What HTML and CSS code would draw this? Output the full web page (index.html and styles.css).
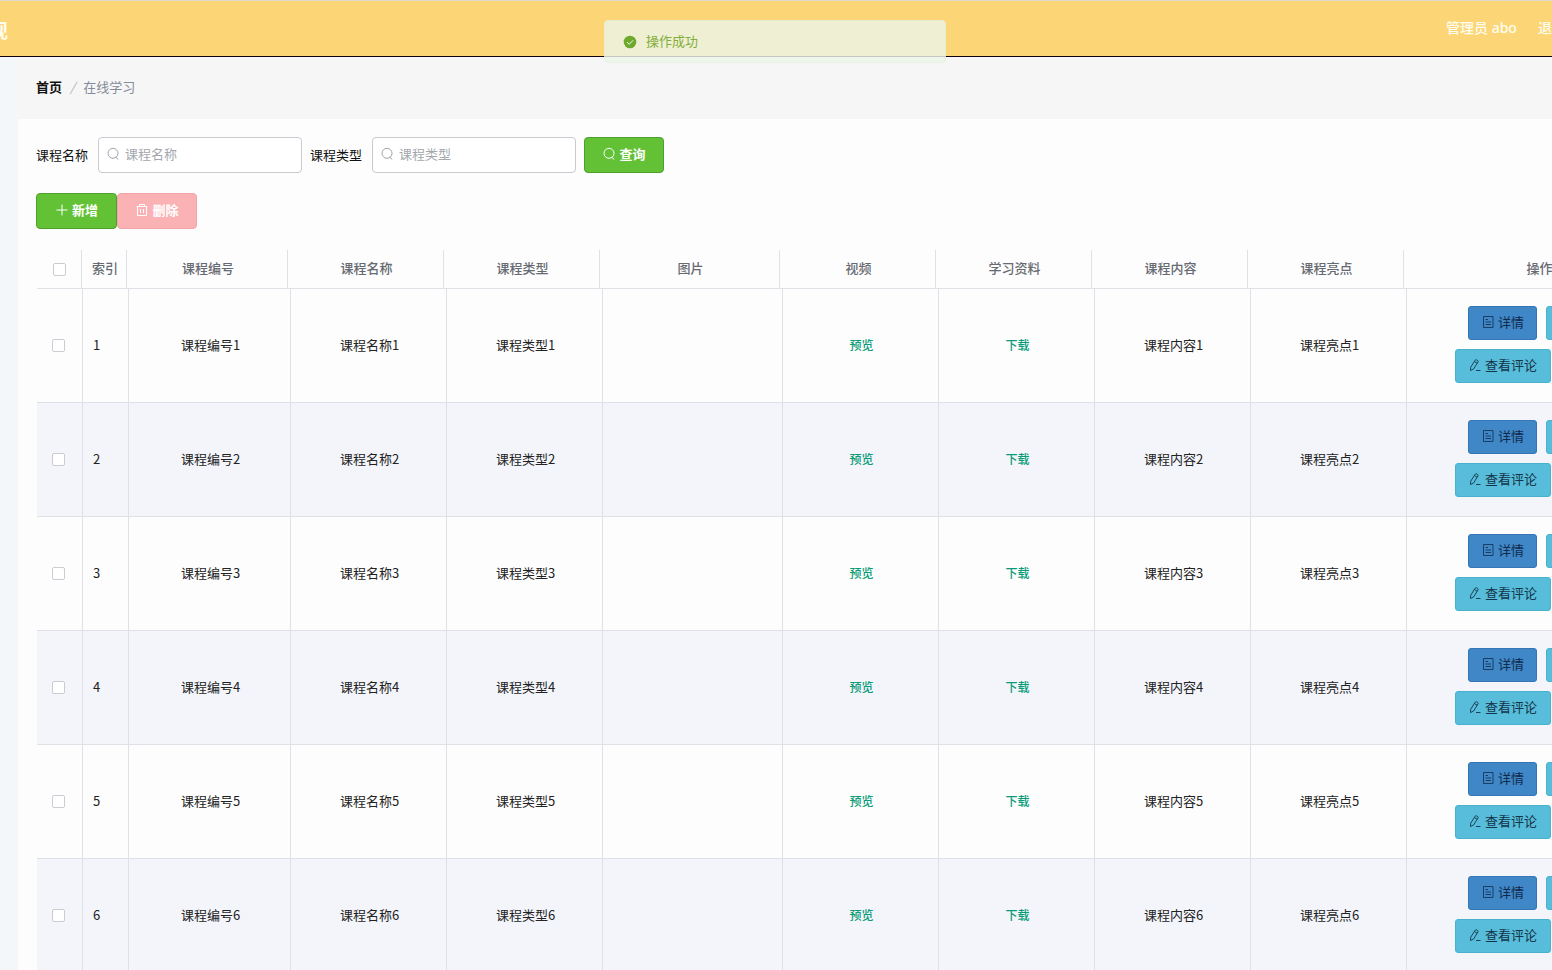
FILE: index.html
```html
<!DOCTYPE html>
<html lang="zh-CN">
<head>
<meta charset="utf-8">
<title>在线学习</title>
<link rel="stylesheet" href="styles.css">
</head>
<body>
<svg class="sprite" aria-hidden="true">
  <symbol id="search" viewBox="0 0 14 14"><circle cx="7" cy="6.3" r="5"/><path d="M9.5 10l2.8 2.6"/></symbol>
  <symbol id="plus" viewBox="0 0 14 14"><path d="M7 1.5v11M1.5 7h11"/></symbol>
  <symbol id="trash" viewBox="0 0 14 14"><path d="M1.5 3.5h11M4.5 3.5v-2h5v2M2.5 3.5v9h9v-9M5.5 6v4M8.5 6v4"/></symbol>
  <symbol id="doc" viewBox="0 0 14 14"><path stroke-width=".8" d="M2.5 1.5h9.5v11h-9.5zM4.5 4.5h2.5M4.5 7h5.5M4.5 9.5h5.5"/></symbol>
  <symbol id="edit" viewBox="0 0 14 14"><path stroke-width=".9" d="M7.2 2.2q.6-.8 1.5-.3l1 .6q.8.6.3 1.4l-4.5 7.2-3 1.4.2-3.3zM6.4 3.5l2.8 1.7M8 12.5h4.5"/></symbol>
</svg>
<header class="topbar">
  <h1 class="brand">现</h1>
  <nav class="account"><span>管理员 abo</span><a href="#">退</a></nav>
</header>
<div class="toast" role="status">
  <svg class="toast-icon" viewBox="0 0 14 14"><circle cx="7" cy="7" r="6.3"/><path d="M4 7.2l2.2 2.1 3.9-4"/></svg>
  <span>操作成功</span>
</div>
<div class="layout">
  <aside class="side"></aside>
  <main class="main">
    <nav class="crumbs"><a href="#">首页</a><i>/</i><span>在线学习</span></nav>
    <section class="card">
      <form class="filters">
        <label for="name">课程名称</label>
        <div class="field"><svg class="icon"><use href="#search"/></svg><input id="name" type="text" placeholder="课程名称"></div>
        <label for="type">课程类型</label>
        <div class="field"><svg class="icon"><use href="#search"/></svg><input id="type" type="text" placeholder="课程类型"></div>
        <button class="btn green" type="button"><svg class="icon"><use href="#search"/></svg>查询</button>
      </form>
      <div class="tools">
        <button class="btn green add" type="button"><svg class="icon"><use href="#plus"/></svg>新增</button>
        <button class="btn pink" type="button" disabled><svg class="icon"><use href="#trash"/></svg>删除</button>
      </div>
      <div class="grid">
        <table class="head">
          <colgroup><col class="h-check"><col class="h-index"><col class="h-code"><col class="c-std"><col class="c-std"><col class="c-pic"><col class="c-std"><col class="c-std"><col class="c-std"><col class="c-std"><col class="c-act"></colgroup>
          <thead><tr><th class="all"><input type="checkbox" aria-label="全选"></th><th>索引</th><th>课程编号</th><th>课程名称</th><th>课程类型</th><th>图片</th><th>视频</th><th>学习资料</th><th>课程内容</th><th>课程亮点</th><th>操作</th></tr></thead>
        </table>
        <table class="body">
          <colgroup><col class="b-check"><col class="b-index"><col class="b-code"><col class="c-std"><col class="c-std"><col class="c-pic"><col class="c-std"><col class="c-std"><col class="c-std"><col class="c-std"><col class="c-act"></colgroup>
          <tbody id="rows"></tbody>
        </table>
      </div>
    </section>
  </main>
</div>
<script src="rows.js"></script>
</body>
</html>
```
FILE: rows.js
```js
const rows = document.getElementById("rows");
for (let n = 1; n <= 6; n++) {
  rows.insertAdjacentHTML("beforeend", `<tr>
    <td class="pick"><input type="checkbox" aria-label="${n}"></td>
    <td class="num">${n}</td>
    <td>课程编号${n}</td><td>课程名称${n}</td><td>课程类型${n}</td><td></td>
    <td><a href="#">预览</a></td><td><a href="#">下载</a></td>
    <td>课程内容${n}</td><td>课程亮点${n}</td>
    <td class="ops"><div class="acts">
      <div class="line"><button class="act blue" type="button"><svg class="icon"><use href="#doc"/></svg>详情</button><button class="act cyan" type="button"></button></div>
      <div class="line"><button class="act cyan wide" type="button"><svg class="icon"><use href="#edit"/></svg>查看评论</button><button class="act cyan" type="button"></button></div>
    </div></td></tr>`);
}
```
FILE: styles.css
```css
* { box-sizing: border-box; }
body {
  margin: 0;
  height: 100vh;
  overflow: hidden;
  background: #f6f6f6;
  color: #222;
  font: 13px/20px "Noto Sans CJK SC", sans-serif;
  display: flex;
  flex-direction: column;
}
a { color: inherit; text-decoration: none; }
button, input { font: inherit; }
.sprite { position: absolute; width: 0; height: 0; }
.icon { width: 14px; height: 14px; flex: none; fill: none; stroke: currentColor; }

.topbar {
  flex: none;
  height: 57px;
  padding-bottom: 2px;
  display: flex;
  align-items: center;
  justify-content: space-between;
  background: #fcd676;
  border-top: 1px solid #dcdcc8;
  border-bottom: 1px solid #100010;
  color: #fffdf0;
  white-space: nowrap;
}
.brand { margin: 0 0 0 -11px; font-size: 19px; line-height: 28px; padding-top: 4px; }
.account { display: flex; gap: 21px; width: 106px; font-family: "Noto Sans", "Noto Sans CJK SC", sans-serif; font-size: 14px; font-weight: 500; }

.toast {
  position: absolute;
  top: 20px;
  left: calc(50% - 172px);
  width: 342px;
  height: 43px;
  padding: 0 18px;
  display: flex;
  align-items: center;
  gap: 9px;
  border: 1px solid #e5f3df;
  border-radius: 4px;
  background: #edf5e8;
  color: #67a52f;
  opacity: .82;
}
.toast span { padding-bottom: 2px; }
.toast-icon { width: 14px; height: 14px; fill: #4ea01c; }
.toast-icon path { fill: none; stroke: #fff; }

.layout { flex: 1; display: flex; min-height: 0; }
.side { flex: none; width: 18px; background: #f3f7fa; }
.main { flex: 1; min-width: 0; overflow: hidden; }
.crumbs { height: 62px; padding: 0 18px 2px; display: flex; align-items: center; gap: 8px; color: #858b99; }
.crumbs a { color: #111; font-weight: 700; }
.crumbs i { color: #aab0bb; }

.card { background: #fdfdfd; padding: 18px 0 0 18px; min-height: 100%; }
.filters { display: flex; align-items: center; }
.filters label { width: 62px; color: #111; }
.field {
  width: 204px;
  height: 36px;
  margin-right: 8px;
  padding: 0 7px 2px;
  display: flex;
  align-items: center;
  gap: 5px;
  background: #fff;
  border: 1px solid #c8cad0;
  border-radius: 4px;
  color: #a0a3aa;
}
.field input { flex: 1; min-width: 0; padding: 0; border: 0; outline: 0; background: none; color: #222; }
.field input::placeholder { color: #a5a7ad; }
.btn {
  width: 80px;
  height: 36px;
  padding: 0 0 3px;
  display: flex;
  align-items: center;
  justify-content: center;
  gap: 3px;
  border: 1px solid #4f9f2c;
  border-radius: 4px;
  background: #62c134;
  color: #fff;
  font-weight: 700;
}
.add { width: 81px; }
.pink { border-color: #f3a5a8; background: #fab2b5; }
.tools { display: flex; padding: 20px 0; }

.grid { overflow: hidden; margin: 1px 0 0 1px; }
table { table-layout: fixed; border-collapse: separate; border-spacing: 0; width: 1637px; }
.body { width: 1640px; }
.h-check, .h-index { width: 45px; }
.h-code { width: 161px; }
.b-check, .b-index { width: 46px; }
.b-code { width: 162px; }
.c-std { width: 156px; }
.c-pic { width: 180px; }
.c-act { width: 270px; }
th, td { padding: 0 0 2px 2px; text-align: center; border-right: 1px solid #dfe1e6; border-bottom: 1px solid #dfe1e6; }
th { height: 39px; color: #666a72; font-weight: 500; }
td { height: 114px; }
tbody tr:nth-child(even) { background: #f3f5fa; }
td a { color: #0a9c78; font-size: 12px; font-weight: 500; }
.num { text-align: left; padding-left: 10px; }
.all { padding: 0; }
.pick { padding: 0 3px 0 0; }
.ops { padding: 0 0 2px; }
input[type="checkbox"] {
  appearance: none;
  display: block;
  width: 13px;
  height: 13px;
  margin: 0 auto;
  border: 1px solid #c9ccd2;
  border-radius: 2px;
  background: #fff;
}
.acts { display: flex; flex-direction: column; gap: 9px; }
.line { display: flex; justify-content: center; gap: 9px; }
.act {
  width: 69px;
  height: 34px;
  padding: 0 0 2px;
  display: flex;
  align-items: center;
  justify-content: center;
  gap: 3px;
  border: 1px solid #48b2cd;
  border-radius: 3px;
  background: #57bdda;
  color: #143449;
}
.blue { background: #3f87c7; border-color: #3476b3; color: #102b4c; }
.wide { width: 96px; }
```
